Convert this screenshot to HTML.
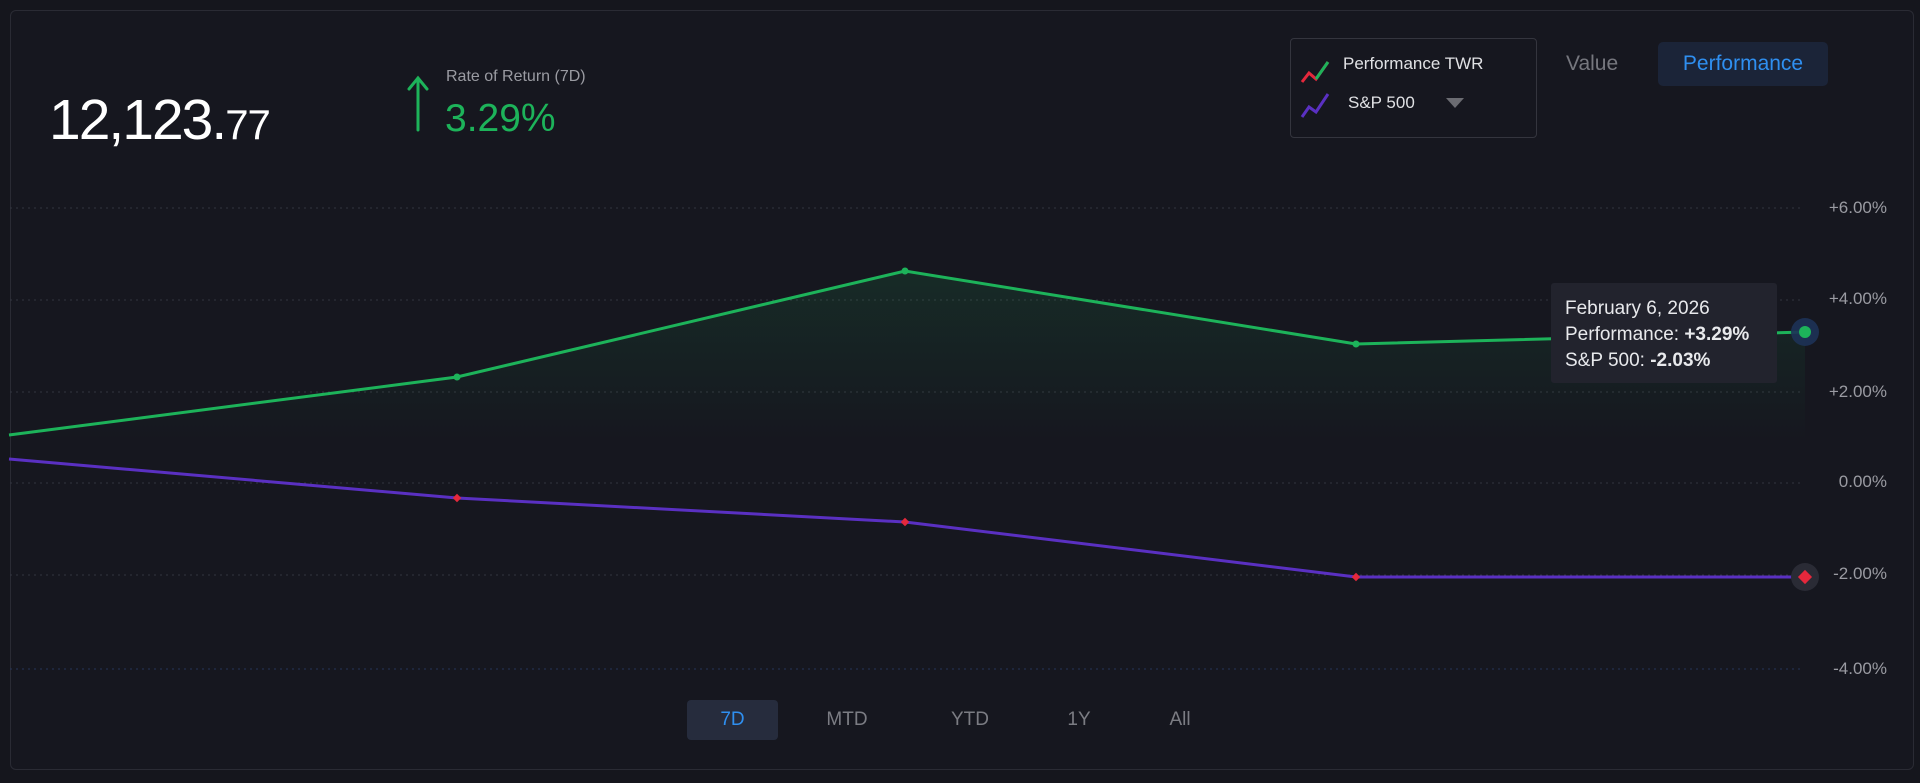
<!DOCTYPE html>
<html><head><meta charset="utf-8"><style>
html,body{margin:0;padding:0;background:#15161d;width:1920px;height:783px;overflow:hidden;font-family:"Liberation Sans",sans-serif}
.card{position:absolute;left:10px;top:10px;width:1902px;height:758px;border:1px solid #2a2b34;border-radius:6px;background:#16171f}
.abs{position:absolute;white-space:nowrap}
</style></head><body>
<div class="card"></div>
<svg class="abs" style="left:0;top:0" width="1920" height="783">
<defs><linearGradient id="g" x1="0" y1="0" x2="0" y2="1"><stop offset="0" stop-color="#1db35a" stop-opacity="0.13"/><stop offset="1" stop-color="#1db35a" stop-opacity="0"/></linearGradient></defs>
<g stroke="#33353f" stroke-width="1" stroke-dasharray="2 4">
<line x1="10" y1="208" x2="1802" y2="208"/><line x1="10" y1="300" x2="1802" y2="300"/><line x1="10" y1="392" x2="1802" y2="392"/><line x1="10" y1="483" x2="1802" y2="483"/><line x1="10" y1="575" x2="1802" y2="575"/>
<line x1="10" y1="669" x2="1802" y2="669" stroke="#25365a"/>
</g>
<polygon points="9,435 457,377 905,271 1356,344 1805,332 1805,440 9,440" fill="url(#g)"/>
<polyline points="9,435 457,377 905,271 1356,344 1805,332" fill="none" stroke="#1db35a" stroke-width="3"/>
<polyline points="9,459 457,498 905,522 1356,577 1805,577" fill="none" stroke="#5a30c2" stroke-width="3"/>
<g fill="#1db35a"><circle cx="457" cy="377" r="3.5"/><circle cx="905" cy="271" r="3.5"/><circle cx="1356" cy="344" r="3.5"/></g>
<g fill="#e5283c"><rect x="454" y="495" width="6" height="6" transform="rotate(45 457 498)"/><rect x="902" y="519" width="6" height="6" transform="rotate(45 905 522)"/><rect x="1353" y="574" width="6" height="6" transform="rotate(45 1356 577)"/></g>
<circle cx="1805" cy="332" r="14" fill="#1d3256" opacity="0.9"/>
<circle cx="1805" cy="332" r="6" fill="#1db35a"/>
<circle cx="1805" cy="577" r="14" fill="#2a2b35"/>
<rect x="1800" y="572" width="10" height="10" fill="#e5283c" transform="rotate(45 1805 577)"/>
<path d="M418 130 V78 M409 89 L418 78 L427 89" stroke="#1db35a" stroke-width="3" fill="none" stroke-linecap="round"/>
<path d="M1302 82 L1309 73 L1316 79 L1328 62" stroke="#e5283c" stroke-width="3" fill="none"/>
<path d="M1316 79 L1328 62" stroke="#1db35a" stroke-width="3" fill="none"/>
<path d="M1302 117 L1309 107 L1316 112 L1328 94" stroke="#5a30c2" stroke-width="3" fill="none"/>
<polygon points="1446,98 1464,98 1455,108" fill="#6b6c72"/>
</svg>
<div class="abs" style="left:49px;top:87px;font-size:57px;color:#fff;letter-spacing:-2px">12,123.<span style="font-size:42px;letter-spacing:-1px">77</span></div>
<div class="abs" style="left:446px;top:68px;font-size:16px;color:#9a9ba2">Rate of Return (7D)</div>
<div class="abs" style="left:445px;top:97px;font-size:39px;color:#1db35a">3.29%</div>
<div class="abs" style="left:1290px;top:38px;width:245px;height:98px;border:1px solid #34353e;border-radius:4px"></div>
<div class="abs" style="left:1343px;top:54px;font-size:17px;color:#e0e1e4">Performance TWR</div>
<div class="abs" style="left:1348px;top:93px;font-size:17px;color:#e0e1e4">S&amp;P 500</div>
<div class="abs" style="left:1566px;top:52px;font-size:21px;color:#76777e">Value</div>
<div class="abs" style="left:1658px;top:42px;width:170px;height:44px;background:#1b2438;border-radius:5px;color:#2f8ff0;font-size:21px;line-height:44px;text-align:center">Performance</div>
<div class="abs" style="right:33px;top:198px;font-size:17px;color:#9a9ba2">+6.00%</div>
<div class="abs" style="right:33px;top:289px;font-size:17px;color:#9a9ba2">+4.00%</div>
<div class="abs" style="right:33px;top:382px;font-size:17px;color:#9a9ba2">+2.00%</div>
<div class="abs" style="right:33px;top:472px;font-size:17px;color:#9a9ba2">0.00%</div>
<div class="abs" style="right:33px;top:564px;font-size:17px;color:#9a9ba2">-2.00%</div>
<div class="abs" style="right:33px;top:659px;font-size:17px;color:#9a9ba2">-4.00%</div>
<div class="abs" style="left:1551px;top:283px;width:226px;height:100px;background:#22232d;border-radius:3px"></div>
<div class="abs" style="left:1565px;top:296px;font-size:19px;color:#e8e9ec;line-height:26px">February 6, 2026<br>Performance: <b>+3.29%</b><br>S&amp;P 500: <b>-2.03%</b></div>
<div class="abs" style="left:687px;top:700px;width:91px;height:40px;background:#262c3d;border-radius:4px;color:#2f8ff0;font-size:19px;line-height:40px;text-align:center">7D</div>
<div class="abs" style="left:807px;top:700px;width:80px;line-height:40px;text-align:center;font-size:19px;color:#7b7c83">MTD</div>
<div class="abs" style="left:930px;top:700px;width:80px;line-height:40px;text-align:center;font-size:19px;color:#7b7c83">YTD</div>
<div class="abs" style="left:1039px;top:700px;width:80px;line-height:40px;text-align:center;font-size:19px;color:#7b7c83">1Y</div>
<div class="abs" style="left:1140px;top:700px;width:80px;line-height:40px;text-align:center;font-size:19px;color:#7b7c83">All</div>
</body></html>
